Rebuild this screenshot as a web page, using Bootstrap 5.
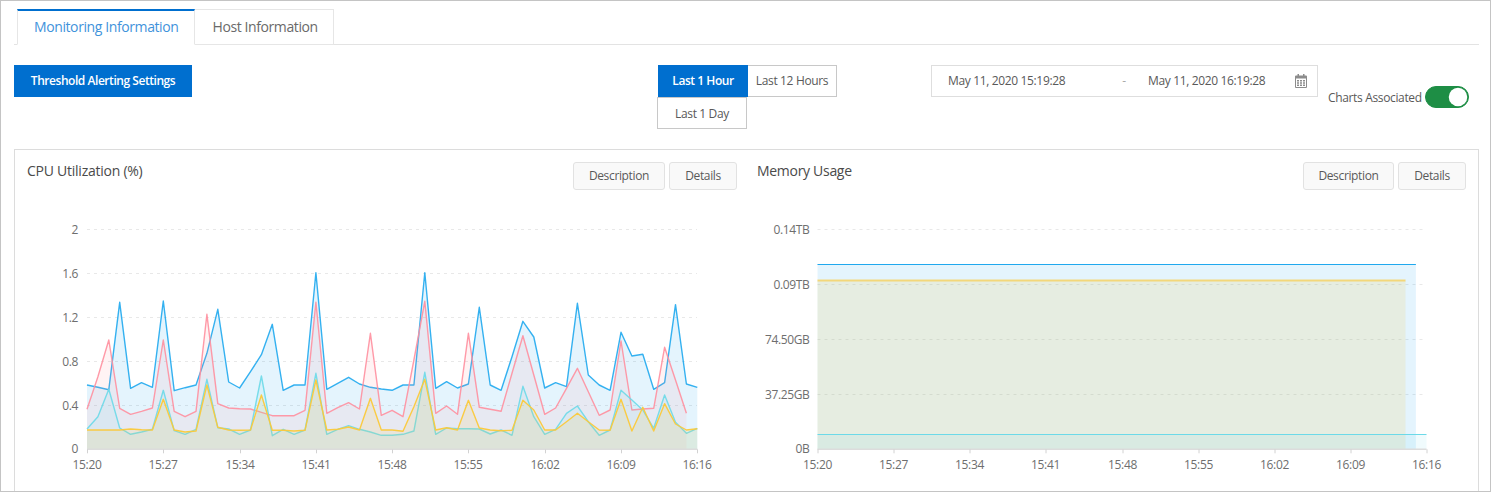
<!DOCTYPE html>
<html lang="en">
<head>
<meta charset="utf-8">
<title>Monitoring</title>
<link href="https://cdn.jsdelivr.net/npm/bootstrap@5.3.0/dist/css/bootstrap.min.css" rel="stylesheet">
<style>
html,body{margin:0;background:#fff;overflow:hidden}
body{font-family:"Open Sans","Noto Sans",sans-serif;font-size:12px;letter-spacing:-.35px;color:#595959}
.shell{height:492px;border:1px solid #c4c4c4;overflow:hidden}
.tabbar{margin:8px 11px 0 13px;padding-left:3px;border-bottom:1px solid #e3e3e3;height:36px}
.tabbar .nav-link{height:36px;padding:0 15px 0 17px;border:1px solid #e6e6e6;border-left-width:0;border-radius:0;font-size:14px;letter-spacing:-.4px;color:#6a6a6a;line-height:34px;margin:0;background:#fff}
.tabbar .nav-link.active{color:#3f93db;border:1px solid #e6e6e6;border-top:2px solid #006fcf;border-bottom-color:#fff;line-height:32px;padding:0 16px}
.toolrow{margin:20px 0 0 13px;height:84px}
.btn.alertbtn{width:178px;height:32px;padding:0;border-radius:0;background:#006fcf;border-color:#006fcf;color:#fff;font-size:12px;font-weight:600;letter-spacing:-.45px;line-height:28px}
.rangegrp{margin-left:465px;width:181px}
.btn.rangebtn{height:32px;padding:0;border-radius:0;font-size:12px;letter-spacing:-.35px;color:#595959;background:#fff;border:1px solid #c8c8c8;line-height:30px}
.btn.rangebtn.w1{width:90px;margin-left:1px;background:#006fcf;border-color:#006fcf;color:#fff;font-weight:600;letter-spacing:-.45px}
.btn.rangebtn.w2{width:89px;margin-left:0;border-left:0}
.btn.rangebtn.w3{width:90px;line-height:32px}
.datebox{margin-left:93px;width:387px;height:32px;border:1px solid #dedede;padding:0 10px 0 16px}
.datepart{width:118px;white-space:nowrap}
.datedash{width:82px;padding-left:34px;text-align:center;color:#aaa}
.switchwrap{margin:21px 0 0 10px;width:141px;height:22px;padding:0;min-height:0}
.switchlabel{white-space:nowrap;margin-right:3px;padding-top:2px}
.form-switch .form-check-input.togglebox{width:44px;height:22px;margin:0;background-color:#1e8e45;border:1px solid #1e8e45;float:none;background-image:url("data:image/svg+xml,%3csvg xmlns='http://www.w3.org/2000/svg' viewBox='-4 -4 8 8'%3e%3ccircle r='3.7' fill='%23fff'/%3e%3c/svg%3e")}
.panelbox{margin:0 11px 0 13px;border:1px solid #dcdcdc;height:360px;width:1465px}
.chartcol{width:731.5px}
.charthead{height:28px;margin-top:12px;padding:0 9.5px 0 12px}
.second .charthead{padding:0 12px 0 10.5px}
.charttitle{font-size:14px;letter-spacing:-.25px;color:#4a4a4a;line-height:18px}
.second .charttitle{letter-spacing:-.3px}
.btn.chartbtn{height:28px;padding:0;border-radius:3px;font-size:12px;letter-spacing:-.35px;color:#595959;background:#f9f9f9;border:1px solid #e2e2e2;line-height:26px}
.chartbtn.desc{width:92px;margin-right:4px}
.second .chartbtn.desc{width:91px}
.chartbtn.more{width:68px}
.plot{display:block}
.plot text{font-size:12px;fill:#6e6e6e;letter-spacing:-.35px;font-family:"Open Sans","Noto Sans",sans-serif}
</style>
</head>
<body>
<div class="shell">
  <ul class="nav nav-tabs tabbar">
    <li class="nav-item"><a class="nav-link active" href="#">Monitoring Information</a></li>
    <li class="nav-item"><a class="nav-link" href="#">Host Information</a></li>
  </ul>
  <div class="d-flex align-items-start toolrow">
    <button type="button" class="btn btn-primary alertbtn">Threshold Alerting Settings</button>
    <div class="d-flex flex-wrap rangegrp">
      <button type="button" class="btn rangebtn w1">Last 1 Hour</button>
      <button type="button" class="btn rangebtn w2">Last 12 Hours</button>
      <button type="button" class="btn rangebtn w3">Last 1 Day</button>
    </div>
    <div class="d-flex align-items-center datebox">
      <span class="datepart">May 11, 2020 15:19:28</span>
      <span class="datedash">-</span>
      <span class="datepart">May 11, 2020 16:19:28</span>
      <svg class="ms-auto" width="12" height="14" viewBox="0 0 12 14" aria-hidden="true">
        <path fill="#8c8c8c" d="M2.5 0h1.5v1.5h4V0h1.5v1.5H11a1 1 0 0 1 1 1V13a1 1 0 0 1-1 1H1a1 1 0 0 1-1-1V2.500a1 1 0 0 1 1-1h1.500z"/>
        <rect x="1" y="4.500" width="10" height="8.500" fill="#fff"/>
        <path fill="#8c8c8c" d="M2 6h2v1.500H2zM5 6h2v1.500H5zM8 6h2v1.500H8zM2 8.300h2v1.500H2zM5 8.300h2v1.500H5zM8 8.300h2v1.500H8zM2 10.600h2v1.500H2zM5 10.600h2v1.500H5zM8 10.600h2v1.500H8z"/>
      </svg>
    </div>
    <div class="d-flex align-items-center switchwrap form-switch">
      <span class="switchlabel">Charts Associated</span>
      <input class="form-check-input togglebox" type="checkbox" role="switch" checked aria-label="Charts Associated">
    </div>
  </div>
  <div class="panelbox d-flex">
    <div class="chartcol">
      <div class="d-flex justify-content-between charthead">
        <div class="charttitle">CPU Utilization (%)</div>
        <div class="d-flex"><button type="button" class="btn chartbtn desc">Description</button><button type="button" class="btn chartbtn more">Details</button></div>
      </div>
      <svg class="plot" id="cpuplot" width="731.5" height="300" viewBox="15 190 731.5 300"></svg>
    </div>
    <div class="chartcol second">
      <div class="d-flex justify-content-between charthead">
        <div class="charttitle">Memory Usage</div>
        <div class="d-flex"><button type="button" class="btn chartbtn desc">Description</button><button type="button" class="btn chartbtn more">Details</button></div>
      </div>
      <svg class="plot" id="memplot" width="731.5" height="300" viewBox="746.5 190 731.5 300"></svg>
    </div>
  </div>
</div>
<script>
var Z=function(v){return 210+v/3};
var blue=[525,532,539,277,535,518,532,273,542,533,525,430,298,516,534,485,434,343,541,525,525,188,538,520,502,522,532,537,541,525,525,188,535,515,534,522,292,525,541,440,334,381,534,518,530,280,495,525,541,367,438,433,538,518,284,522,532];
var pink=[598,500,390,595,613,604,594,390,604,620,604,313,581,594,596,597,607,617,617,617,601,277,610,593,578,597,370,616,601,620,450,274,610,588,613,370,592,598,604,490,377,495,613,594,535,475,545,616,600,393,600,597,595,412,510,610];
var cyan=[657,620,538,654,673,666,658,541,662,673,658,508,653,657,673,660,498,677,658,673,660,490,673,658,647,658,666,676,676,673,663,487,673,654,656,656,657,672,660,676,529,620,673,658,610,588,635,676,660,541,570,600,655,555,637,670,655];
var yellow=[660,660,660,660,657,659,660,568,660,666,663,525,652,660,661,660,555,661,661,663,661,510,660,658,651,660,565,660,660,664,590,508,660,653,660,571,654,660,662,661,571,600,660,660,635,610,635,660,661,568,663,592,663,581,642,660,656];
var COL={b:'#1fa8ee',p:'#ff8f9f',c:'#6cd9e8',y:'#fbc93a'};
function grid(x0,x1,ys,labs,lx){var s='';ys.forEach(function(y,i){
  if(i<ys.length-1)s+='<line x1="'+x0+'" x2="'+x1+'" y1="'+y+'" y2="'+y+'" stroke="#e8e8e8" stroke-width="1" stroke-dasharray="3 4"/>';
  s+='<text x="'+lx+'" y="'+(y+4)+'" text-anchor="end">'+labs[i]+'</text>';});return s;}
function axis(x0,x1,y,labels){var s='<line x1="'+x0+'" x2="'+x1+'" y1="'+y+'" y2="'+y+'" stroke="#dcdcdc" stroke-width="1.4"/>';
  labels.forEach(function(l,i){var x=Math.round(x0+(x1-x0)*i/(labels.length-1))+.5;
  s+='<line x1="'+x+'" x2="'+x+'" y1="'+y+'" y2="'+(y+4)+'" stroke="#d2d2d2"/>';
  s+='<text x="'+(x-.5)+'" y="'+(y+20)+'" text-anchor="middle">'+l+'</text>';});return s;}
var times=['15:20','15:27','15:34','15:41','15:48','15:55','16:02','16:09','16:16'];
function area(xy,base,col,op,w,so){var p=xy.map(function(a){return a[0].toFixed(1)+','+a[1].toFixed(1)}).join(' ');
  var f=xy[0][0].toFixed(1)+','+base+' '+p+' '+xy[xy.length-1][0].toFixed(1)+','+base;
  return '<polygon points="'+f+'" fill="'+col+'" fill-opacity="'+op+'"/><polyline points="'+p+'" fill="none" stroke="'+col+'" stroke-opacity="'+so+'" stroke-width="'+w+'" stroke-linejoin="round"/>';}
var x0=87,dx=610.3/56,base=449.3;
function ser(a){return a.map(function(v,i){return [x0+dx*i,Z(v)]})}
var s=grid(87,697,[229.5,273.5,317.5,361.5,405.5,449.3],['2','1.6','1.2','0.8','0.4','0'],78);
s+=area(ser(blue),base,COL.b,.12,1.4,.9)+area(ser(pink),base,COL.p,.11,1.4,.9)+area(ser(cyan),base,COL.c,.1,1.4,.9)+area(ser(yellow),base,COL.y,.13,1.4,.95);
s+=axis(87,697.3,base,times);
document.getElementById('cpuplot').innerHTML=s;
var m=grid(817,1426,[229.5,284.5,339.5,394.5,449.3],['0.14TB','0.09TB','74.50GB','37.25GB','0B'],809);
m+=area([[817,264.5],[1415.4,264.5]],base,COL.b,.12,1.2,1)+area([[817,280.5],[1405,280.5]],base,COL.y,.14,2,.65)+area([[817,434.5],[1426,434.5]],base,COL.c,.1,1.2,1);
m+=axis(817,1426,base,times);
document.getElementById('memplot').innerHTML=m;
</script>
<script src="https://cdn.jsdelivr.net/npm/bootstrap@5.3.0/dist/js/bootstrap.bundle.min.js"></script>
</body>
</html>
